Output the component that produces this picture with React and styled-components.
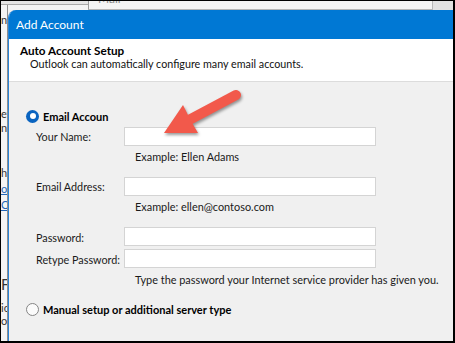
import React from "react";
import styled, { createGlobalStyle } from "styled-components";

const FONT = `Lato, "Noto Sans", "Liberation Sans", sans-serif`;

const Global = createGlobalStyle`
  html, body { margin: 0; padding: 0; background: #000; overflow: hidden; }
  * { box-sizing: border-box; }
`;

const Screen = styled.div`
  width: 455px;
  height: 343px;
  background: #000;
  padding: 1px 2px 2px 1px;
  font-family: ${FONT};
`;

const Desktop = styled.div`
  position: relative;
  width: 452px;
  height: 340px;
  overflow: hidden;
  background: #fff;
`;

/* ---------- background windows ---------- */
const BackWindow = styled.div`
  position: absolute;
  left: 0;
  top: 0;
  width: 87px;
  height: 100%;
  background: #f3f3f3;
  border-top: 3px solid #e4e4e4;
  display: flex;
  flex-direction: column;
`;

const BackTop = styled.div`
  height: 1px;
  background: #a9a9a9;
`;

const BackStrip = styled.div`
  width: 7px;
  flex: 1;
  border-right: 1px solid #8f8f8f;
  display: flex;
  flex-direction: column;
  overflow: hidden;
  background: #f4f4f4;
`;

const Frag = styled.span`
  margin-top: ${(p) => p.$mt}px;
  font-size: ${(p) => p.$size || 11}px;
  line-height: 12px;
  color: ${(p) => (p.$link ? "#2166b8" : "#333")};
  text-decoration: ${(p) => (p.$link ? "underline" : "none")};
  white-space: nowrap;
`;

const MailWindow = styled.div`
  position: absolute;
  left: 87px;
  top: -6px;
  width: 344px;
  height: 15px;
  background: #f4f4f4;
  border-left: 1px solid #9c9c9c;
  border-bottom: 1px solid #b5b5b5;
  display: flex;
  align-items: flex-end;
  justify-content: space-between;
  padding: 0 12px 4px 9px;
  color: #8a8a8a;
  font-size: 12px;
  line-height: 12px;
`;

const SidePane = styled.div`
  position: absolute;
  left: 431px;
  top: 0;
  width: 21px;
  height: 10px;
  background: #e2e2e2;
  border-left: 1px solid #b8b8b8;
`;

/* ---------- dialog ---------- */
const Dialog = styled.div`
  position: absolute;
  left: 7px;
  top: 9px;
  right: 0;
  bottom: 0;
  border-left: 1px solid #2b84d6;
  border-top-left-radius: 8px;
  overflow: hidden;
  background: #f0f0f0;
  display: flex;
  flex-direction: column;
`;

const TitleBar = styled.div`
  height: 29px;
  flex: none;
  background: #0078d4;
  color: #fff;
  display: flex;
  align-items: center;
  padding-left: 7px;
  font-size: 12px;
`;

const Header = styled.div`
  flex: none;
  height: 43px;
  background: #fff;
  border-bottom: 1px solid #dcdcdc;
  padding: 5px 0 0 11px;
  display: flex;
  flex-direction: column;
`;

const HeaderTitle = styled.div`
  font-weight: 700;
  font-size: 11.7px;
  line-height: 13px;
  color: #000;
`;

const HeaderSub = styled.div`
  font-size: 10.75px;
  line-height: 13px;
  color: #111;
  padding-left: 10px;
`;

const Body = styled.div`
  flex: 1;
  padding: 26px 0 0 17px;
  display: flex;
  flex-direction: column;
`;

const RadioRow = styled.label`
  display: flex;
  align-items: center;
  gap: 4px;
  height: 16px;
  margin-top: ${(p) => p.$mt || 0}px;
  font-weight: 700;
  font-size: 11px;
  color: #000;
`;

const RadioDot = styled.span`
  width: 13px;
  height: 13px;
  border-radius: 50%;
  flex: none;
  display: flex;
  align-items: center;
  justify-content: center;
  background: ${(p) => (p.$checked ? "#0a64c0" : "#fbfbfb")};
  border: ${(p) => (p.$checked ? "none" : "1px solid #858585")};
  &::after {
    content: "";
    width: 6px;
    height: 6px;
    border-radius: 50%;
    background: #fff;
    display: ${(p) => (p.$checked ? "block" : "none")};
  }
`;

const Form = styled.div`
  margin-left: 10px;
  display: grid;
  grid-template-columns: 88px 252px;
`;

const FieldLabel = styled.div`
  grid-column: 1;
  margin-top: ${(p) => p.$mt}px;
  height: 19px;
  display: flex;
  align-items: center;
  padding-top: ${(p) => p.$drop || 0}px;
  font-size: 10.8px;
  color: #1a1a1a;
  white-space: nowrap;
`;

const Input = styled.div`
  grid-column: 2;
  margin-top: ${(p) => p.$mt}px;
  height: 19px;
  background: #fff;
  border: 1px solid #d4d4d4;
`;

const Hint = styled.div`
  grid-column: 2;
  margin-top: ${(p) => p.$mt}px;
  height: 16px;
  line-height: 16px;
  padding-left: 11px;
  font-size: 10.9px;
  color: #1a1a1a;
  white-space: nowrap;
`;

/* ---------- annotation arrow ---------- */
const ArrowSvg = styled.svg`
  position: absolute;
  left: 149px;
  top: 79px;
  width: 100px;
  height: 65px;
  overflow: visible;
  filter: drop-shadow(1.5px 2.5px 1.5px rgba(0, 0, 0, 0.4));
  pointer-events: none;
`;

function Arrow() {
  const ox = 150, oy = 80;
  const p = (x, y) => `${x - ox},${y - oy}`;
  return (
    <ArrowSvg viewBox="0 0 100 65">
      <line
        x1={236 - ox}
        y1={95 - oy}
        x2={189 - ox}
        y2={120 - oy}
        stroke="#f2594b"
        strokeWidth="10"
        strokeLinecap="round"
      />
      <polygon
        points={`${p(164, 133)} ${p(183, 105)} ${p(191, 121)} ${p(198, 133)}`}
        fill="#f2594b"
      />
    </ArrowSvg>
  );
}

export default function App() {
  return (
    <>
      <Global />
      <Screen>
        <Desktop>
          <BackWindow>
            <BackTop />
            <BackStrip>
              <Frag $mt={9}>n</Frag>
              <Frag $mt={82}>et</Frag>
              <Frag $mt={2}>ng</Frag>
              <Frag $mt={33}>hi</Frag>
              <Frag $mt={4} $link>ou</Frag>
              <Frag $mt={4} $link>O</Frag>
              <Frag $mt={67} $size={15}>F</Frag>
              <Frag $mt={12}>ic</Frag>
              <Frag $mt={1}>o</Frag>
            </BackStrip>
          </BackWindow>
          <MailWindow>
            <span>Mail</span>
            <span>^</span>
          </MailWindow>
          <SidePane />
          <Dialog>
            <TitleBar>Add Account</TitleBar>
            <Header>
              <HeaderTitle>Auto Account Setup</HeaderTitle>
              <HeaderSub>Outlook can automatically configure many email accounts.</HeaderSub>
            </Header>
            <Body>
              <RadioRow>
                <RadioDot $checked />
                Email Accoun
              </RadioRow>
              <Form>
                <FieldLabel $mt={3}>Your Name:</FieldLabel>
                <Input $mt={3} />
                <Hint $mt={3}>Example: Ellen Adams</Hint>
                <FieldLabel $mt={12}>Email Address:</FieldLabel>
                <Input $mt={12} />
                <Hint $mt={3}>Example: ellen@contoso.com</Hint>
                <FieldLabel $mt={12} $drop={2}>Password:</FieldLabel>
                <Input $mt={12} />
                <FieldLabel $mt={3} $drop={2}>Retype Password:</FieldLabel>
                <Input $mt={3} />
                <Hint $mt={4}>Type the password your Internet service provider has given you.</Hint>
              </Form>
              <RadioRow $mt={13}>
                <RadioDot />
                Manual setup or additional server type
              </RadioRow>
            </Body>
          </Dialog>
          <Arrow />
        </Desktop>
      </Screen>
    </>
  );
}
